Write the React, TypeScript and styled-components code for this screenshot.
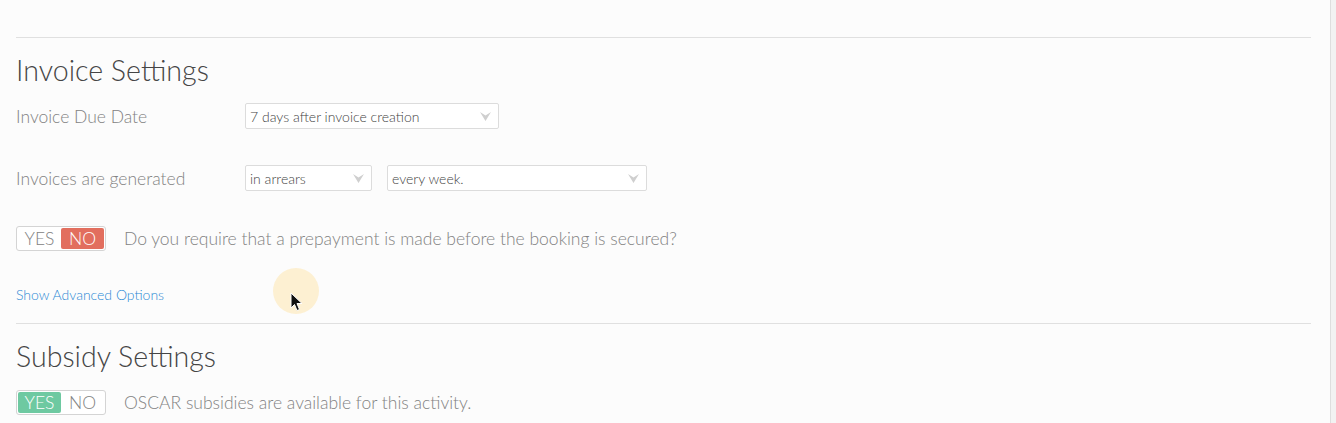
import React from "react";
import styled, { createGlobalStyle } from "styled-components";

const GlobalStyle = createGlobalStyle`
  html, body {
    margin: 0;
    padding: 0;
    background: #fcfcfc;
    font-family: Lato, "Open Sans", sans-serif;
  }
`;

const Page = styled.div`
  position: relative;
  display: flex;
  width: 100vw;
  height: 423px;
  overflow: hidden;
`;

const Main = styled.div`
  flex: 1;
  padding: 37px 19px 0 16px;
`;

const ScrollTrack = styled.div`
  width: 5px;
  background: #f2f2f2;
  border-left: 1px solid #dedede;
`;

const Section = styled.section<{ $pad: number }>`
  border-top: 1px solid #e0e0e0;
  padding-top: ${(p) => p.$pad}px;
`;

const Heading = styled.h2`
  margin: 0;
  font-size: 28.6px;
  line-height: 34px;
  font-weight: 300;
  color: #454545;
`;

const Row = styled.div<{ $top: number }>`
  display: flex;
  align-items: center;
  margin-top: ${(p) => p.$top}px;
`;

const Label = styled.div`
  width: 229px;
  font-size: 17.5px;
  font-weight: 300;
  color: #828282;
`;

const Select = styled.div<{ $width: number }>`
  display: flex;
  align-items: center;
  justify-content: space-between;
  box-sizing: border-box;
  width: ${(p) => p.$width}px;
  height: 26px;
  padding: 0 7px 0 4px;
  margin-right: 15px;
  background: #fff;
  border: 1px solid #dcdcdc;
  border-radius: 2px;
  font-size: 14px;
  font-weight: 300;
  color: #444;
`;

const Toggle = styled.div`
  display: flex;
  box-sizing: border-box;
  width: 90px;
  height: 25px;
  padding: 1px;
  border: 1px solid #d4d4d4;
  border-radius: 3px;
  background: #fff;
  margin-right: 18px;
`;

const ToggleOption = styled.div<{ $on?: string }>`
  flex: 1;
  display: flex;
  align-items: center;
  justify-content: center;
  border-radius: 2px;
  font-size: 17.5px;
  font-weight: 300;
  color: ${(p) => (p.$on ? "#fff" : "#828282")};
  background: ${(p) => p.$on || "transparent"};
`;

const Question = styled.div`
  font-size: 17.5px;
  font-weight: 300;
  color: #828282;
`;

const Link = styled.a`
  display: block;
  margin-top: 35px;
  margin-bottom: 19px;
  font-size: 14px;
  line-height: 18px;
  font-weight: 300;
  color: #2a88d4;
  text-decoration: none;
`;

const CursorSpot = styled.div`
  position: absolute;
  left: 273px;
  top: 268px;
  width: 46px;
  height: 46px;
  border-radius: 50%;
  background: #fdf0d2;
  svg {
    position: absolute;
    left: 17px;
    top: 24px;
  }
`;

const Arrow = () => (
  <svg width="11" height="9" viewBox="0 0 11 9">
    <path d="M0 0 L5.5 3.5 L11 0 L5.5 9 Z" fill="#cfcfcf" />
  </svg>
);

const Pointer = () => (
  <svg width="14" height="21" viewBox="0 0 14 21">
    <path
      d="M1 1 L1 16 L4.5 12.5 L7 18.5 L9.5 17.5 L7 11.5 L12 11.5 Z"
      fill="#111"
      stroke="#fff"
      strokeWidth="1"
      strokeLinejoin="round"
    />
  </svg>
);

const App = () => {
  return (
    <>
      <GlobalStyle />
      <Page>
        <Main>
          <Section $pad={15}>
            <Heading>Invoice Settings</Heading>
            <Row $top={16}>
              <Label>Invoice Due Date</Label>
              <Select $width={254}>
                7 days after invoice creation <Arrow />
              </Select>
            </Row>
            <Row $top={36}>
              <Label>Invoices are generated</Label>
              <Select $width={127}>
                in arrears <Arrow />
              </Select>
              <Select $width={260}>
                every week. <Arrow />
              </Select>
            </Row>
            <Row $top={35}>
              <Toggle>
                <ToggleOption>YES</ToggleOption>
                <ToggleOption $on="#e26e5e">NO</ToggleOption>
              </Toggle>
              <Question>Do you require that a prepayment is made before the booking is secured?</Question>
            </Row>
            <Link href="#">Show Advanced Options</Link>
          </Section>
          <Section $pad={15}>
            <Heading>Subsidy Settings</Heading>
            <Row $top={17}>
              <Toggle>
                <ToggleOption $on="#6ec9a1">YES</ToggleOption>
                <ToggleOption>NO</ToggleOption>
              </Toggle>
              <Question>OSCAR subsidies are available for this activity.</Question>
            </Row>
          </Section>
        </Main>
        <ScrollTrack />
        <CursorSpot>
          <Pointer />
        </CursorSpot>
      </Page>
    </>
  );
};

export default App;
